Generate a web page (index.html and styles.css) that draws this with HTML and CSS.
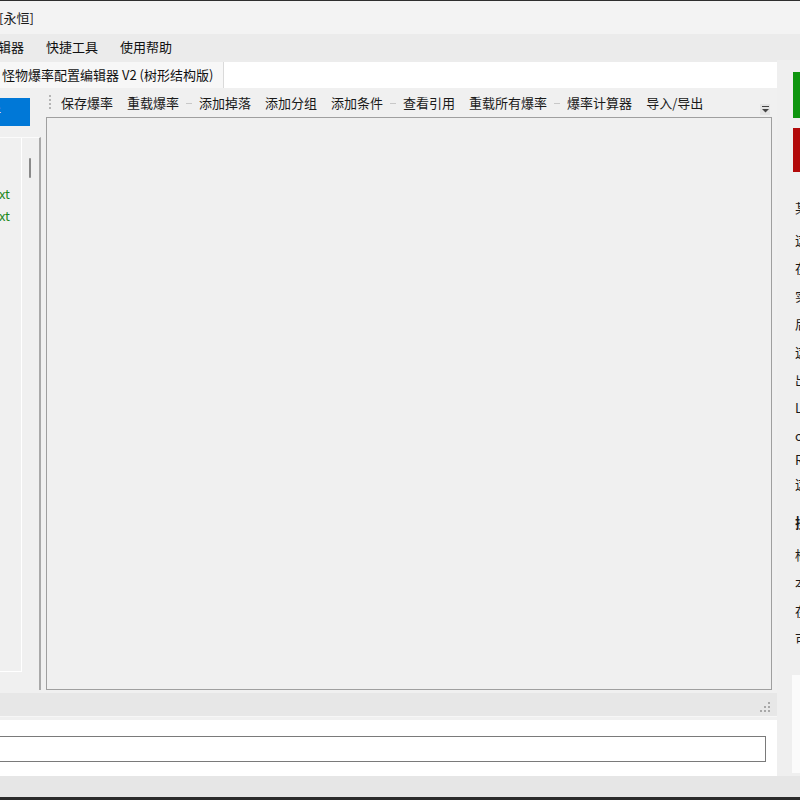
FILE: index.html
```html
<!DOCTYPE html>
<html lang="zh-CN">
<head>
  <meta charset="UTF-8" />
  <title>怪物爆率配置编辑器</title>
  <link rel="stylesheet" href="styles.css">
</head>
<body>
  <div class="window">
    <div class="titlebar"><span class="title">[永恒]</span></div>
    <div class="menubar">
      <span class="menu-item first">编辑器</span>
      <span class="menu-item">快捷工具</span>
      <span class="menu-item">使用帮助</span>
    </div>

    <div class="workspace">
      <div class="main">
        <div class="tabstrip">
          <div class="tab active">怪物爆率配置编辑器 V2 (树形结构版)</div>
        </div>

        <div class="tabpage">
          <div class="split">
            <!-- file list (left) -->
            <div class="left">
              <div class="btn-blue"><span>刷新</span></div>
              <div class="filelist">
                <div class="filelist-inner">
                  <div class="file-spacer"></div>
                  <div class="file">怪物爆率.txt</div>
                  <div class="file">通用爆率.txt</div>
                </div>
                <div class="vscroll"><div class="thumb"></div></div>
              </div>
            </div>

            <!-- tree editor (right) -->
            <div class="right">
              <div class="toolbar">
                <span class="grip"></span>
                <span class="tool">保存爆率</span>
                <span class="tool">重载爆率</span>
                <span class="sep"></span>
                <span class="tool">添加掉落</span>
                <span class="tool">添加分组</span>
                <span class="tool">添加条件</span>
                <span class="sep"></span>
                <span class="tool">查看引用</span>
                <span class="tool">重载所有爆率</span>
                <span class="sep"></span>
                <span class="tool">爆率计算器</span>
                <span class="tool">导入/导出</span>
                <span class="overflow">
                  <svg width="7" height="7" viewBox="0 0 7 7"><rect x="0" y="0" width="7" height="1" fill="#444"/><path d="M0 3h7l-3.5 3.5z" fill="#444"/></svg>
                </span>
              </div>
              <div class="tree"></div>
            </div>
          </div>

          <div class="statusbar">
            <svg class="sizegrip" width="12" height="12" viewBox="0 0 12 12">
              <g fill="#a8a8a8">
                <rect x="9" y="1" width="2" height="2"/>
                <rect x="5" y="5" width="2" height="2"/><rect x="9" y="5" width="2" height="2"/>
                <rect x="1" y="9" width="2" height="2"/><rect x="5" y="9" width="2" height="2"/><rect x="9" y="9" width="2" height="2"/>
              </g>
            </svg>
          </div>
        </div>

        <div class="console">
          <input class="cmd" type="text">
        </div>
      </div>

      <!-- help column (right edge) -->
      <div class="side">
        <div class="side-btn green"></div>
        <div class="side-btn red"></div>
        <div class="help">
          <div class="line first">某些说明</div>
          <div class="group-a">
            <div class="line">这里显示</div>
            <div class="line">在左侧选择</div>
            <div class="line">实时预览</div>
            <div class="line">后台保存</div>
            <div class="line">这些配置</div>
            <div class="line">出现错误</div>
            <div class="line">Load</div>
          </div>
          <div class="group-b">
            <div class="line">open</div>
            <div class="line">Reload</div>
            <div class="line">这个</div>
          </div>
          <div class="line heading">操作说明</div>
          <div class="group-a">
            <div class="line">框选节点</div>
            <div class="line">本地保存</div>
            <div class="line">在树中</div>
            <div class="line">可以拖动</div>
          </div>
        </div>
        <div class="side-box"></div>
      </div>
    </div>

    <div class="taskbar"></div>
  </div>
</body>
</html>
```

FILE: styles.css
```css
/* Window chrome */
html, body { margin: 0; padding: 0; }
body {
  font-family: "Noto Sans CJK SC", "Noto Sans", sans-serif;
  font-size: 13px;
  color: #111;
  background: #f0f0f0;
  width: 800px;
  height: 800px;
  overflow: hidden;
}
.window {
  display: flex;
  flex-direction: column;
  height: 800px;
  border-top: 1px solid #2e2e2e;
  box-sizing: border-box;
}
.titlebar {
  height: 33px;
  background: #f3f3f3;
  display: flex;
  align-items: center;
  flex-shrink: 0;
}
.title { margin-left: -1px; font-size: 13px; color: #1a1a1a; }

.menubar {
  height: 26px;
  background: #ebebeb;
  display: flex;
  align-items: center;
  flex-shrink: 0;
  white-space: nowrap;
  overflow: hidden;
}
.menu-item { padding: 0 11px; line-height: 26px; }
.menu-item.first { margin-left: -26px; }

/* Workspace */
.workspace { display: flex; height: 716px; flex-shrink: 0; }
.main { width: 777px; display: flex; flex-direction: column; }

.tabstrip {
  height: 28px;
  box-sizing: border-box;
  padding-top: 2px;
  background: #ececec;
  display: flex;
  flex-shrink: 0;
}
.tabstrip::after { content: ""; flex: 1; background: #fff; }
.tab {
  background: #f7f7f7;
  border-right: 1px solid #dadada;
  padding: 0 10px 0 2px;
  line-height: 25px;
  white-space: nowrap;
  color: #111;
}

.tabpage {
  height: 632px;
  background: #f0f0f0;
  display: flex;
  flex-direction: column;
  box-sizing: border-box;
  flex-shrink: 0;
}
.split { display: flex; height: 602px; padding-right: 5px; gap: 5px; flex-shrink: 0; }

/* Left list */
.left { width: 41px; display: flex; flex-direction: column; gap: 11px; }
.btn-blue {
  margin-top: 10px;
  width: 30px;
  height: 28px;
  background: #0078d7;
  color: #fff;
  display: flex;
  justify-content: flex-end;
  align-items: center;
  overflow: hidden;
  padding-right: 29px;
  box-sizing: border-box;
  white-space: nowrap;
  flex-shrink: 0;
}
.filelist {
  flex: 1;
  border-top: 1px solid #fbfbfb;
  border-right: 2px solid #a9a9a9;
  display: flex;
  background: #f0f0f0;
}
.filelist-inner {
  width: 21px;
  height: 533px;
  border-right: 1px solid #fff;
  border-bottom: 1px solid #fff;
  display: flex;
  flex-direction: column;
  overflow: hidden;
}
.file-spacer { height: 45px; flex-shrink: 0; }
.file {
  height: 22px;
  line-height: 22px;
  display: flex;
  justify-content: flex-end;
  padding-right: 11px;
  white-space: nowrap;
  color: #1f8a1f;
  flex-shrink: 0;
}
.vscroll { flex: 1; position: relative; }
.thumb {
  position: absolute;
  left: 7px;
  top: 20px;
  width: 2px;
  height: 20px;
  background: #8a8a8a;
  border-radius: 1px;
}

/* Right tree editor */
.right { flex: 1; display: flex; flex-direction: column; }
.toolbar {
  margin-top: 2px;
  height: 27px;
  box-sizing: border-box;
  padding-bottom: 3px;
  display: flex;
  align-items: center;
  background: #f0f0f0;
  white-space: nowrap;
  position: relative;
  flex-shrink: 0;
}
.grip {
  width: 8px;
  height: 16px;
  background: radial-gradient(circle, #b5b5b5 1px, transparent 1.2px) 3px 0 / 2px 4px repeat-y;
}
.tool { padding: 0 7px; color: #1a1a1a; }
.sep {
  width: 6px;
  height: 1px;
  background: #c8c8c8;
  margin-top: 2px;
}
.overflow {
  position: absolute;
  right: 2px;
  top: 14px;
  width: 10px;
  height: 11px;
  display: flex;
  align-items: center;
  justify-content: center;
  background: #e4e4e4;
}
.tree {
  flex: 1;
  border: 1px solid #9f9f9f;
  background: #f0f0f0;
}

.statusbar {
  margin-top: 3px;
  height: 23px;
  background: #e7e7e7;
  border-bottom: 1px solid #f6f6f6;
  display: flex;
  justify-content: flex-end;
  align-items: flex-end;
  padding-right: 6px;
  flex-shrink: 0;
}
.sizegrip { margin-bottom: 3px; }

/* Command line */
.console {
  flex: 1;
  background: #fff;
  display: flex;
  align-items: flex-start;
  padding-top: 16px;
  padding-right: 11px;
}
.cmd {
  width: 100%;
  height: 26px;
  box-sizing: border-box;
  border: 1px solid #7a7a7a;
  border-left: none;
  background: #fff;
  margin: 0;
}

/* Side help column */
.side {
  flex: 1;
  background: #efefef;
  display: flex;
  flex-direction: column;
  overflow: hidden;
  padding-left: 16px;
}
.side-btn { width: 100px; flex-shrink: 0; }
.side-btn.green { margin-top: 12px; height: 46px; background: #0f960f; }
.side-btn.red { margin-top: 10px; height: 44px; background: #b20a0a; }
.help { padding-left: 2px; white-space: nowrap; color: #1a1a1a; }
.line { height: 28px; line-height: 28px; }
.line.first { margin-top: 22px; margin-bottom: 4px; }
.group-b .line { height: 24px; line-height: 24px; }
.group-b { margin-top: 2px; }
.line.heading {
  margin-top: 14px;
  height: 24px;
  line-height: 24px;
  font-weight: bold;
  font-size: 14px;
  margin-bottom: 7px;
}
.side-box {
  margin-top: 22px;
  margin-left: -1px;
  height: 98px;
  width: 100px;
  background: #fbfbfb;
}

.taskbar {
  height: 21px;
  background: #e6e6e6;
  border-bottom: 3px solid #2b2b2b;
  flex-shrink: 0;
}
```
